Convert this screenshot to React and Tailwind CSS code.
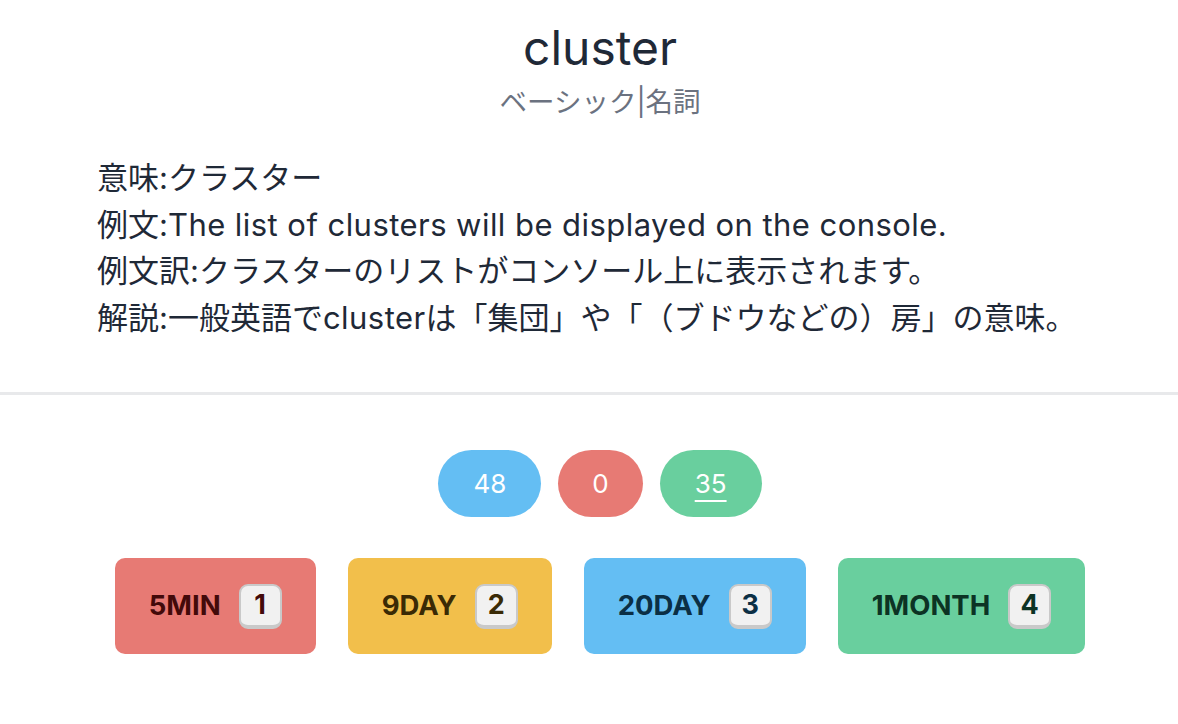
const font = { fontFamily: 'Inter, "Noto Sans CJK JP", sans-serif' };

const lines = [
  ["意味:", "", "クラスター"],
  ["例文:", "The list of clusters will be displayed on the console.", ""],
  ["例文訳:", "", "クラスターのリストがコンソール上に表示されます。"],
  ["解説:一般英語で", "cluster", "は「集団」や「（ブドウなどの）房」の意味。"],
];

const buttons = [
  { label: "5MIN", key: "1", bg: "bg-[#e77a74]", text: "text-[#430a0a]" },
  { label: "9DAY", key: "2", bg: "bg-[#f2bf4b]", text: "text-[#3a2a05]" },
  { label: "20DAY", key: "3", bg: "bg-[#64bef3]", text: "text-[#0b2f45]" },
  { label: "1MONTH", key: "4", bg: "bg-[#69cf9e]", text: "text-[#0c3324]" },
];

const App = () => {
  return (
    <div className="min-h-screen bg-white text-[#1f2937] [text-spacing-trim:space-all]" style={font}>
      {/* word */}
      <div className="flex flex-col items-center pt-6 pl-[22px]">
        <h1 className="text-[48px] leading-[48px] font-normal">cluster</h1>
        <p className="mt-[14px] text-[27.5px] leading-[32px] text-[#6b7280]">ベーシック|名詞</p>
      </div>

      {/* details */}
      <div className="mt-[37px] px-[97px] text-[31px] leading-[46.5px]">
        {lines.map(([a, latin, b]) => (
          <p key={a + b}>
            {a}
            <span className="tracking-[0.45px]">{latin}</span>
            {b}
          </p>
        ))}
      </div>

      <div className="mt-[51px] h-[3px] bg-[#e8e9eb]" />

      {/* counts */}
      <div className="mt-[55px] pl-[22px] flex justify-center gap-[17px] text-[26px] text-white">
        <span className="h-[67px] px-[35px] rounded-full bg-[#64bef3] flex items-center">48</span>
        <span className="h-[67px] px-[34px] rounded-full bg-[#e77a74] flex items-center">0</span>
        <span className="h-[67px] px-[35px] rounded-full bg-[#69cf9e] flex items-center">
          <span className="underline decoration-2 underline-offset-[7px]">35</span>
        </span>
      </div>

      {/* answer buttons */}
      <div className="mt-[41px] pl-[22px] flex justify-center gap-8">
        {buttons.map((b) => (
          <button
            key={b.label}
            className={`${b.bg} ${b.text} h-[96px] px-[34px] rounded-[10px] flex items-center gap-[18px] text-[27.5px] font-bold`}
          >
            {b.label}
            <span className="w-[43px] h-[45px] rounded-[9px] bg-[#f1f1f1] border-2 border-b-4 border-[#c9c9c9] flex items-center justify-center text-[27px]">
              {b.key}
            </span>
          </button>
        ))}
      </div>
    </div>
  );
};

export default App;
